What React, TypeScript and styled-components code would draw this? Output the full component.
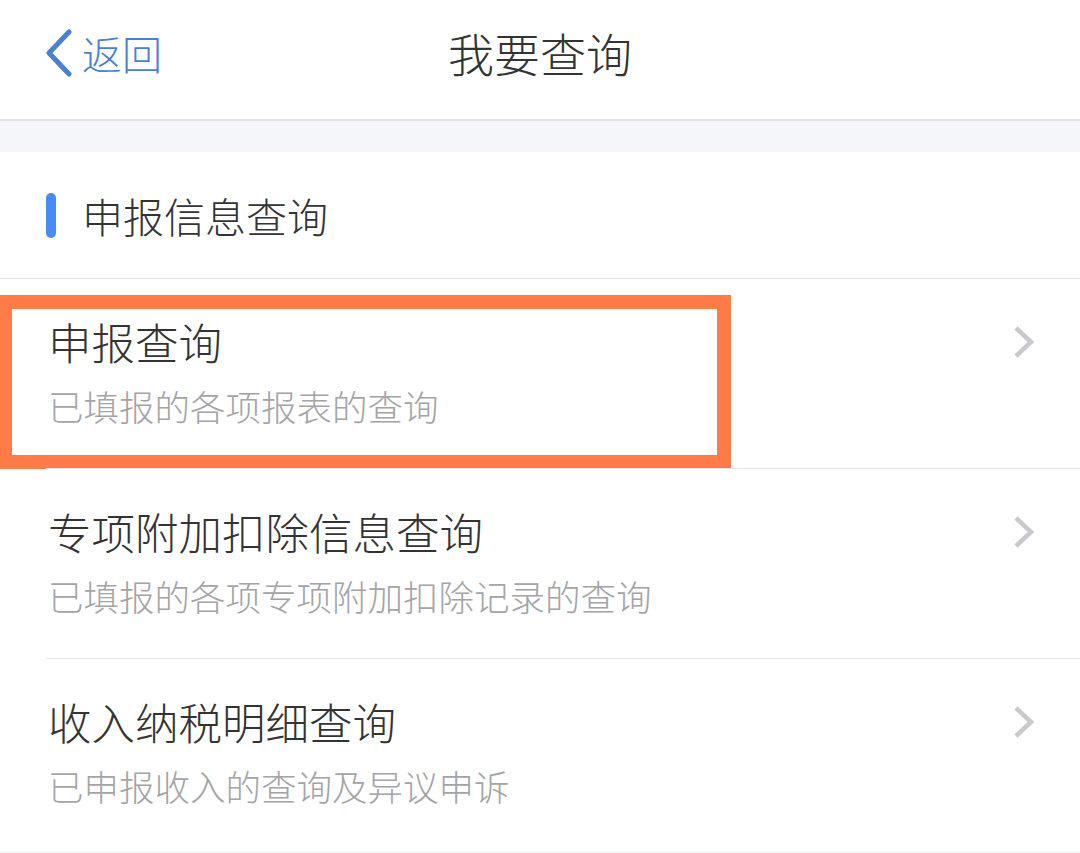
import styled, { createGlobalStyle } from 'styled-components';

const GlobalStyle = createGlobalStyle`
  html, body {
    margin: 0;
    padding: 0;
    background: #f5f6fa;
  }
  body {
    font-family: "Noto Sans CJK SC", "Noto Sans", sans-serif;
  }
`;

const Page = styled.div`
  width: 1080px;
  min-height: 853px;
  background: #f5f6fa;
`;

const NavBar = styled.div`
  height: 119px;
  background: #fff;
  border-bottom: 2px solid #e3e3e6;
  display: grid;
  grid-template-columns: 1fr auto 1fr;
  align-items: center;
`;

const BackButton = styled.div`
  display: flex;
  align-items: center;
  padding-left: 44px;
  color: #4a7fd6;
  font-size: 40px;
  font-weight: 300;
  gap: 8px;
  margin-top: -14px;
`;

const NavTitle = styled.div`
  font-size: 46px;
  font-weight: 300;
  color: #333;
  margin-top: -16px;
`;

const Gap = styled.div`
  height: 31px;
`;

const Card = styled.div`
  background: #fff;
  padding-bottom: 2px;
`;

const SectionHead = styled.div`
  height: 126px;
  display: flex;
  align-items: center;
  gap: 26px;
  padding-left: 46px;
  border-bottom: 1px solid #e6e6e8;
  font-size: 41px;
  font-weight: 300;
  color: #333;
`;

const Mark = styled.span`
  width: 10px;
  height: 45px;
  border-radius: 5px;
  background: #4a8af4;
`;

const Row = styled.div<{ $last?: boolean }>`
  position: relative;
  height: 190px;
  display: flex;
  align-items: flex-start;
  justify-content: space-between;
  padding-left: 48px;
  padding-right: 44px;
  box-sizing: border-box;
  &::after {
    content: '';
    display: ${(p) => (p.$last ? 'none' : 'block')};
    position: absolute;
    left: 46px;
    right: 0;
    bottom: 0;
    height: 1px;
    background: #e6e6e8;
  }
`;

const Texts = styled.div`
  display: flex;
  flex-direction: column;
  padding-top: 33px;
  gap: 6px;
`;

const Title = styled.div`
  font-size: 43.5px;
  line-height: 60px;
  font-weight: 300;
  color: #333;
`;

const Sub = styled.div`
  font-size: 35.5px;
  line-height: 56px;
  font-weight: 300;
  color: #a4a4a7;
`;

const Arrow = styled.svg`
  margin-top: 46px;
`;

const Highlight = styled.div`
  position: absolute;
  left: 0;
  top: 16px;
  width: 731px;
  height: 174px;
  border: 14px solid #ff7b47;
  border-left-width: 12px;
  box-sizing: border-box;
  pointer-events: none;
`;

const items = [
  { title: '申报查询', sub: '已填报的各项报表的查询', marked: true },
  { title: '专项附加扣除信息查询', sub: '已填报的各项专项附加扣除记录的查询' },
  { title: '收入纳税明细查询', sub: '已申报收入的查询及异议申诉' },
];

function Chevron() {
  return (
    <Arrow width="24" height="34" viewBox="0 0 24 34">
      <path d="M4 3 L19 17 L4 31" fill="none" stroke="#c9c9cd" strokeWidth="4.5" />
    </Arrow>
  );
}

export default function App() {
  return (
    <>
      <GlobalStyle />
      <Page>
        <NavBar>
          <BackButton>
            <svg width="30" height="48" viewBox="0 0 30 48">
              <path
                d="M25 3 L5 24 L25 45"
                fill="none"
                stroke="#4a7fd6"
                strokeWidth="5"
                strokeLinecap="round"
                strokeLinejoin="round"
              />
            </svg>
            返回
          </BackButton>
          <NavTitle>我要查询</NavTitle>
          <div />
        </NavBar>
        <Gap />
        <Card>
          <SectionHead>
            <Mark />
            申报信息查询
          </SectionHead>
          {items.map((it, i) => (
            <Row key={it.title} $last={i === items.length - 1}>
              <Texts>
                <Title>{it.title}</Title>
                <Sub>{it.sub}</Sub>
              </Texts>
              <Chevron />
              {it.marked && <Highlight />}
            </Row>
          ))}
        </Card>
      </Page>
    </>
  );
}
